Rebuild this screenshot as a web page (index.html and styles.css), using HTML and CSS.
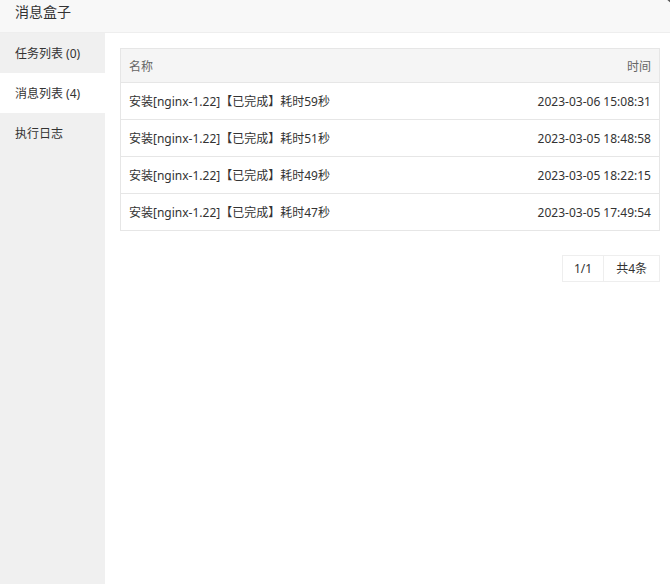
FILE: index.html
```html
<!DOCTYPE html>
<html lang="zh-CN">
<head>
  <meta charset="UTF-8">
  <meta name="viewport" content="width=device-width, initial-scale=1.0">
  <title>消息盒子</title>
  <link rel="stylesheet" href="styles.css">
</head>
<body>
  <div class="layer">
    <div class="layer-title">消息盒子</div>
    <span class="layer-close"></span>

    <div class="layer-body">
      <ul class="tab-list">
        <li>任务列表 (0)</li>
        <li class="active">消息列表 (4)</li>
        <li>执行日志</li>
      </ul>

      <div class="tab-content">
        <table class="msg-table">
          <thead>
            <tr>
              <th>名称</th>
              <th class="time">时间</th>
            </tr>
          </thead>
          <tbody>
            <tr>
              <td>安装[nginx-1.22]【已完成】耗时59秒</td>
              <td class="time">2023-03-06 15:08:31</td>
            </tr>
            <tr>
              <td>安装[nginx-1.22]【已完成】耗时51秒</td>
              <td class="time">2023-03-05 18:48:58</td>
            </tr>
            <tr>
              <td>安装[nginx-1.22]【已完成】耗时49秒</td>
              <td class="time">2023-03-05 18:22:15</td>
            </tr>
            <tr>
              <td>安装[nginx-1.22]【已完成】耗时47秒</td>
              <td class="time">2023-03-05 17:49:54</td>
            </tr>
          </tbody>
        </table>

        <div class="page">
          <span>1/1</span>
          <span>共4条</span>
        </div>
      </div>
    </div>
  </div>
</body>
</html>
```

FILE: styles.css
```css
html, body {
  margin: 0;
  padding: 0;
  height: 100%;
}
body {
  font-family: "Noto Sans", "Noto Sans CJK SC", sans-serif;
  font-size: 12px;
  color: #333;
  background-color: #fff;
  overflow: hidden;
}
.layer {
  position: relative;
  height: 100%;
  display: flex;
  flex-direction: column;
}
.layer-title {
  height: 32px;
  line-height: 24px;
  padding-left: 15px;
  font-size: 14px;
  color: #333;
  background-color: #f8f8f8;
  border-bottom: 1px solid #eee;
}
.layer-close {
  position: absolute;
  right: -25px;
  top: -27px;
  width: 32px;
  height: 32px;
  border-radius: 50%;
  background-color: #5a5a5a;
}
.layer-body {
  flex: 1;
  display: flex;
}
.tab-list {
  width: 105px;
  margin: 0;
  padding: 0;
  list-style: none;
  background-color: #f0f0f0;
}
.tab-list li {
  height: 40px;
  line-height: 42px;
  padding-left: 15px;
  color: #333;
}
.tab-list li.active {
  background-color: #fff;
}
.tab-content {
  flex: 1;
  padding: 15px 10px 0 15px;
}
.msg-table {
  width: 100%;
  border-collapse: collapse;
  border: 1px solid #e6e6e6;
}
.msg-table th {
  height: 33px;
  padding: 0 8px;
  text-align: left;
  font-weight: normal;
  color: #666;
  background-color: #f5f5f5;
  border-bottom: 1px solid #e6e6e6;
}
.msg-table td {
  height: 36px;
  padding: 0 8px;
  border-bottom: 1px solid #e6e6e6;
}
.msg-table .time {
  text-align: right;
}
.page {
  display: flex;
  justify-content: flex-end;
  margin-top: 24px;
}
.page span {
  height: 25px;
  line-height: 25px;
  padding: 0 11px;
  border: 1px solid #eee;
  margin-left: -1px;
  color: #333;
}
.page span:last-child {
  padding: 0 12px;
}
```
